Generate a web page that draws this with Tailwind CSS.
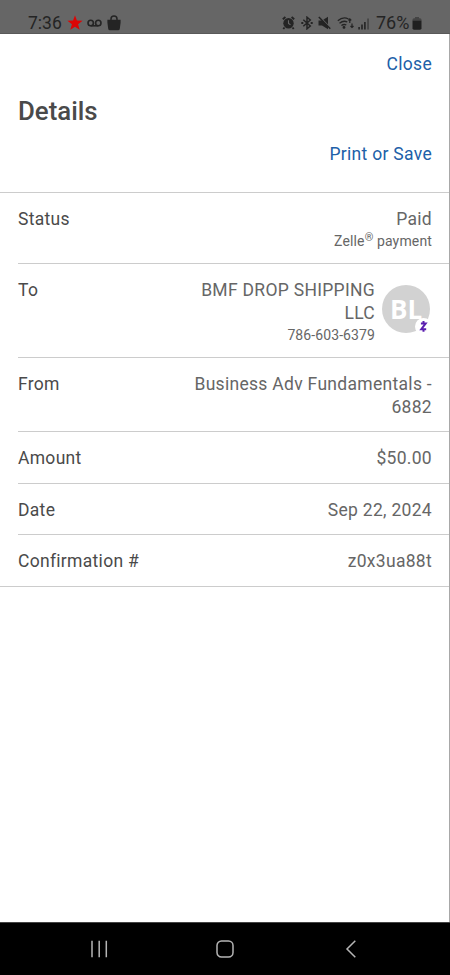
<!DOCTYPE html>
<html lang="en">
<head>
<meta charset="utf-8">
<meta name="viewport" content="width=device-width, initial-scale=1">
<title>Details</title>
<script src="https://cdn.jsdelivr.net/npm/@tailwindcss/browser@4"></script>
</head>
<body class="bg-white">
<div class="w-[450px] h-[975px] flex flex-col overflow-hidden antialiased font-['Roboto',sans-serif] text-[#4a4a4a]">
  <header class="h-[34px] shrink-0 bg-[#666666] border-b border-[#595959] flex items-end text-[#242424] pl-[28px] pr-[28px]">
    <span class="w-[39px] text-[17.5px] leading-[20px] whitespace-nowrap">7:36</span>
    <svg class="w-4 h-4 mb-[2px]" viewBox="0 0 16 16" fill="#dc0505"><path d="M8 .3l1.900 5.200 5.700.2-4.500 3.500 1.600 5.600L8 11.700l-4.700 3.100 1.600-5.600L.4 5.700l5.700-.2z"/></svg>
    <svg class="w-[15px] h-[9px] ml-[4px] mb-[5px]" viewBox="0 0 15 9" fill="none" stroke="#242424" stroke-width="1.600"><circle cx="3.700" cy="4" r="2.700"/><circle cx="11.300" cy="4" r="2.700"/><path d="M3.700 6.800h7.600"/></svg>
    <svg class="w-[14px] h-4 ml-[5px] mb-[2px]" viewBox="0 0 14 16"><path d="M4 6V4a3 3 0 0 1 6 0v2" fill="none" stroke="#242424" stroke-width="1.500"/><path d="M.4 4.700h13.200v3l-.8 6q-.2 1.500-1.700 1.500H2.900q-1.500 0-1.700-1.500l-.8-6z" fill="#242424"/></svg>
    <div class="ml-auto flex items-end">
      <svg class="w-[13px] h-[14px] mb-[3px]" viewBox="0 0 13 14"><circle cx="6.500" cy="7.200" r="5.200" fill="#242424"/><path d="M.8 3.300l2.600-2.200M12.200 3.300L9.600 1.100M2.500 11.500l-1.200 1.500M10.500 11.500l1.200 1.500" stroke="#242424" stroke-width="1.900"/><path d="M6.500 4.300v3.200l2 1.200" fill="none" stroke="#666" stroke-width="1.100"/></svg>
      <svg class="w-[12px] h-[14px] ml-[6px] mb-[3px]" viewBox="0 0 12 14" fill="none" stroke="#242424" stroke-width="1.500"><path d="M2.300 3.700l7 6.300L6 12.800V1.200L9.300 4l-7 6.300"/><path d="M.3 7h2M9.700 7h2" stroke-width="1.800"/></svg>
      <svg class="w-[13px] h-[14px] ml-[5px] mr-px mb-[3px]" viewBox="0 0 13 14"><path d="M.5 4.500h3.500L10 .8v12.400L4 9.500H.5z" fill="#242424"/><path d="M2 1L13 12.300" stroke="#666" stroke-width="1.200"/><path d="M.8 1L12.300 12.800" stroke="#242424" stroke-width="1.500"/></svg>
      <svg class="w-[17px] h-[14px] ml-[5px] mr-px mb-[3px]" viewBox="0 0 17 14" fill="none" stroke="#242424" stroke-width="1.300"><path d="M.8 4.800Q6 .2 11.500 3M2.500 7.300Q6.500 4 10.300 6M4.400 9.600Q7 7.700 9.300 9"/><circle cx="7" cy="11.400" r=".8" fill="#242424"/><path d="M12.800 7V2.800M11.300 4.300l1.500-1.500 1.500 1.500M15 7.500v4M13.500 10l1.500 1.500 1.500-1.500" stroke-width="1.200"/></svg>
      <svg class="w-[12px] h-[13px] ml-[3px] mb-[3px]" viewBox="0 0 12 13" fill="#242424"><path d="M.3 10h1.600v2.500H.3zM3.200 7.500h1.600v5H3.200zM6.100 5h1.600v7.500H6.100z"/><path d="M9.200 1.500h1.700v11H9.200z" fill="#444"/></svg>
      <span class="w-[35px] ml-[6px] text-[18px] leading-[20px] whitespace-nowrap">76%</span>
      <svg class="w-[10px] h-[13px] ml-[1px] mb-[3px]" viewBox="0 0 10 13"><path d="M3 0h4v1.300h1q1.500 0 1.500 1.500V4h-9V2.800Q.5 1.300 2 1.300h1z" fill="#444"/><path d="M.5 3.800h9v7.500q0 1.400-1.500 1.400H2q-1.500 0-1.500-1.400z" fill="#202020"/></svg>
    </div>
  </header>

  <main class="flex-1 border-r border-[#a8a8a8] text-[17.5px] leading-[23px] tracking-[0.3px]">
    <div class="h-[158px] pl-[18px] pr-[17px] pt-[19px]">
      <div class="text-right text-[#2060a8]">Close</div>
      <h1 class="mt-[19px] text-[25.8px] leading-[32px] font-medium tracking-[0px]">Details</h1>
      <div class="mt-[16px] text-right text-[#2060a8]">Print or Save</div>
    </div>
    <dl class="border-y border-[#cccccc] pl-[18px]">
      <div class="h-[71px] pt-[15px] pr-[17px] flex justify-between border-b border-[#cccccc]">
        <dt>Status</dt>
        <dd class="text-right text-[#666666]">Paid<div class="text-[14px] leading-[21px] tracking-[0.15px]">Zelle<sup class="text-[11px] leading-none -top-[5px] tracking-normal">®</sup> payment</div></dd>
      </div>
      <div class="h-[94px] pt-[15px] pr-[17px] flex border-b border-[#cccccc]">
        <dt>To</dt>
        <dd class="ml-auto w-[190px] text-right text-[#666666]">BMF DROP SHIPPING<br>LLC<div class="text-[14px] leading-[21px] tracking-[0.1px]">786-603-6379</div></dd>
        <dd class="relative ml-[7px] mr-[2px] mt-[6px] w-[48px] h-[48px] rounded-full bg-[#d2d2d2] text-white font-['Open_Sans'] text-[26px] font-bold leading-[49px] text-center tracking-[0px]">BL
          <svg class="absolute left-[33px] top-[33px] w-[17px] h-[17px]" viewBox="0 0 17 17"><circle cx="8.500" cy="8.500" r="8.500" fill="#fff"/><path d="M5.900 5.400h4.800L6.300 11.200h4.900M8.500 3v2.400M8.500 11.200v2.600" fill="none" stroke="#5b1fb0" stroke-width="2"/></svg>
        </dd>
      </div>
      <div class="h-[74px] pt-[15px] pr-[17px] flex justify-between border-b border-[#cccccc]">
        <dt>From</dt><dd class="text-right text-[#666666]">Business Adv Fundamentals -<br>6882</dd>
      </div>
      <div class="h-[52px] pt-[15px] pr-[17px] flex justify-between border-b border-[#cccccc]">
        <dt>Amount</dt><dd class="text-[#666666]">$50.00</dd>
      </div>
      <div class="h-[51px] pt-[15px] pr-[17px] flex justify-between border-b border-[#cccccc]">
        <dt>Date</dt><dd class="text-[#666666]">Sep 22, 2024</dd>
      </div>
      <div class="h-[51px] pt-[15px] pr-[17px] flex justify-between">
        <dt>Confirmation #</dt><dd class="text-[#666666]">z0x3ua88t</dd>
      </div>
    </dl>
  </main>

  <nav class="h-[53px] shrink-0 bg-black border-t border-[#444444] flex items-center pl-[90px] text-[#b5b5b5]">
    <svg class="w-[18px] h-[18px]" viewBox="0 0 18 18" stroke="currentColor" stroke-width="1.500"><path d="M2 .7v16.600M9.200 .7v16.600M16.300 .7v16.600"/></svg>
    <svg class="w-[18px] h-[18px] ml-[108px]" viewBox="0 0 18 18" fill="none" stroke="currentColor" stroke-width="1.500"><rect x="1" y="1" width="16" height="16" rx="4.500"/></svg>
    <svg class="w-[12px] h-[18px] ml-[111px]" viewBox="0 0 12 18" fill="none" stroke="currentColor" stroke-width="1.500"><path d="M10.300 .7L2 9l8.300 8.300"/></svg>
  </nav>
</div>
</body>
</html>
